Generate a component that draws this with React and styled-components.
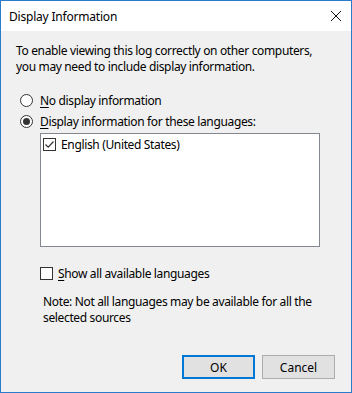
import React from "react";
import styled, { createGlobalStyle } from "styled-components";

const Global = createGlobalStyle`
  html, body { margin: 0; padding: 0; background: #f0f0f0; }
  body { font-family: "Noto Sans", "Liberation Sans", sans-serif; }
`;

const Window = styled.div`
  box-sizing: border-box;
  width: 352px;
  height: 393px;
  border: 1px solid #2b7bcc;
  background: #f0f0f0;
  display: flex;
  flex-direction: column;
  font-size: 12px;
  color: #000;
`;

const TitleBar = styled.div`
  height: 30px;
  background: #fff;
  display: flex;
  align-items: center;
  justify-content: space-between;
  padding: 0 9px 0 8px;
  flex-shrink: 0;
`;

const Title = styled.span`
  font-size: 12px;
  letter-spacing: -0.2px;
`;

const Close = styled.span`
  width: 12px;
  height: 12px;
  display: flex;
  margin-right: 0;
`;

const Body = styled.div`
  flex: 1;
  display: flex;
  flex-direction: column;
  padding: 12px 15px 13px 15px;
`;

const Intro = styled.p`
  margin: 0;
  line-height: 16px;
  letter-spacing: -0.35px;
`;

const Options = styled.div`
  display: flex;
  flex-direction: column;
  gap: 5px;
  margin-top: 17px;
`;

const OptionRow = styled.label`
  display: flex;
  align-items: center;
  gap: 7px;
  height: 16px;
  padding-left: 4px;
  letter-spacing: -0.35px;
`;

const Radio = styled.span`
  box-sizing: border-box;
  width: 13px;
  height: 13px;
  border-radius: 50%;
  border: 1px solid #333;
  background: #fff;
  display: flex;
  align-items: center;
  justify-content: center;
  &::after {
    content: "";
    width: 7px;
    height: 7px;
    border-radius: 50%;
    background: ${(p) => (p.checked ? "#333" : "transparent")};
  }
`;

const ListBox = styled.div`
  box-sizing: border-box;
  margin: 4px 16px 0 24px;
  height: 114px;
  background: #fff;
  border: 1px solid #828790;
  padding: 3px 2px;
`;

const CheckRow = styled.div`
  display: flex;
  align-items: center;
  gap: 5px;
  height: 14px;
  letter-spacing: -0.35px;
  margin-left: ${(p) => p.indent || 0}px;
  margin-top: ${(p) => p.top || 0}px;
`;

const Box = styled.span`
  box-sizing: border-box;
  width: 13px;
  height: 13px;
  border: 1px solid #333;
  background: #fff;
  display: flex;
  align-items: center;
  justify-content: center;
`;

const Note = styled.p`
  margin: 14px 0 0 27px;
  line-height: 16px;
  letter-spacing: -0.35px;
`;

const Buttons = styled.div`
  margin-top: auto;
  display: flex;
  justify-content: flex-end;
  gap: 7px;
  padding-right: 1px;
`;

const Button = styled.button`
  box-sizing: border-box;
  width: 73px;
  height: 24px;
  font-family: inherit;
  font-size: 12px;
  background: #e1e1e1;
  border: ${(p) => (p.primary ? "2px solid #0078d7" : "1px solid #adadad")};
  padding: 0;
  color: #000;
`;

const U = styled.span`
  text-decoration: underline;
  text-underline-offset: 2px;
`;

function Check({ checked }) {
  return (
    <Box>
      {checked && (
        <svg width="11" height="11" viewBox="0 0 11 11">
          <path d="M1.5 5.5 L4.2 8.2 L9.5 2.5" fill="none" stroke="#333" strokeWidth="1.2" />
        </svg>
      )}
    </Box>
  );
}

export default function App() {
  return (
    <>
      <Global />
      <Window>
        <TitleBar>
          <Title>Display Information</Title>
          <Close>
            <svg width="12" height="12" viewBox="0 0 12 12">
              <path d="M1 1 L11 11 M11 1 L1 11" stroke="#111" strokeWidth="1" />
            </svg>
          </Close>
        </TitleBar>
        <Body>
          <Intro>
            To enable viewing this log correctly on other computers,
            <br />
            you may need to include display information.
          </Intro>
          <Options>
            <OptionRow>
              <Radio />
              <span><U>N</U>o display information</span>
            </OptionRow>
            <OptionRow>
              <Radio checked />
              <span><U>D</U>isplay information for these languages:</span>
            </OptionRow>
          </Options>
          <ListBox>
            <CheckRow>
              <Check checked />
              <span>English (United States)</span>
            </CheckRow>
          </ListBox>
          <CheckRow indent={24} top={19}>
            <Check />
            <span><U>S</U>how all available languages</span>
          </CheckRow>
          <Note>
            Note: Not all languages may be available for all the
            <br />
            selected sources
          </Note>
          <Buttons>
            <Button primary>OK</Button>
            <Button>Cancel</Button>
          </Buttons>
        </Body>
      </Window>
    </>
  );
}
